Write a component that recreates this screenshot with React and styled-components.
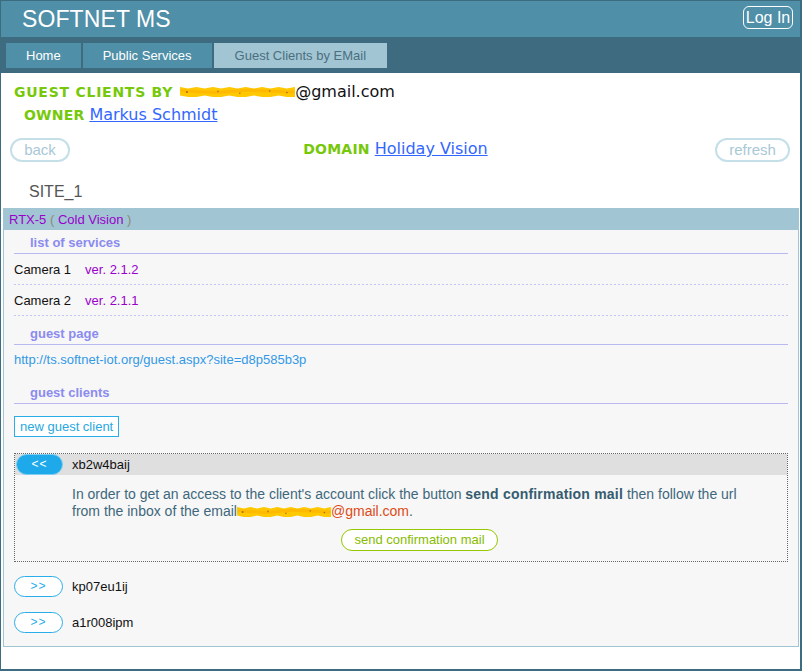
import React from 'react';
import styled, { createGlobalStyle } from 'styled-components';

const Global = createGlobalStyle`
  html, body { margin: 0; padding: 0; background: #fff; }
  body { font-family: "Liberation Sans", Arial, sans-serif; }
  *, *::before, *::after { box-sizing: border-box; }
`;

const Frame = styled.div`
  width: 802px;
  height: 671px;
  border-style: solid;
  border-color: #3d6b7f;
  border-width: 1px 2px 2px 1px;
  display: flex;
  flex-direction: column;
  background: #fff;
  overflow: hidden;
`;

const Header = styled.header`
  height: 36px;
  flex: none;
  background: #4f8fa8;
  display: flex;
  align-items: center;
  justify-content: space-between;
  padding: 0 7px 0 21px;
`;

const Brand = styled.div`
  font-size: 23px;
  color: #fff;
  letter-spacing: 0.1px;
`;

const LoginButton = styled.button`
  align-self: flex-start;
  margin-top: 5px;
  height: 23px;
  width: 50px;
  padding: 0;
  border: 1px solid #fff;
  border-radius: 6px;
  background: transparent;
  color: #fff;
  font-family: "Liberation Sans", Arial, sans-serif;
  font-size: 16px;
  line-height: 21px;
`;

const Nav = styled.nav`
  height: 36px;
  flex: none;
  background: #3e6b80;
  display: flex;
  gap: 2px;
  padding: 6px 0 5px 5px;
`;

const Tab = styled.div`
  height: 25px;
  padding: 0 ${p => (p.$active ? 21 : 20)}px;
  display: flex;
  align-items: center;
  font-size: 13px;
  color: ${p => (p.$active ? '#4b6f80' : '#fff')};
  background: ${p => (p.$active ? '#a2c5d3' : '#4f8fa8')};
`;

const Content = styled.main`
  flex: 1;
  display: flex;
  flex-direction: column;
  padding-top: 9px;
`;

const TitleLine = styled.div`
  line-height: 20px;
  height: 20px;
  padding-left: 13px;
  display: flex;
  align-items: center;
  white-space: nowrap;
`;

const OwnerLine = styled(TitleLine)`
  margin-top: 3px;
  padding-left: 23px;
`;

const GreenLabel = styled.span`
  font-family: "DejaVu Sans", Verdana, sans-serif;
  font-weight: bold;
  font-size: 14px;
  letter-spacing: ${p => p.$ls ?? 0.2}px;
  color: #76c80a;
  margin-right: ${p => p.$gap || 5}px;
`;

const EmailText = styled.span`
  font-family: "DejaVu Sans", Verdana, sans-serif;
  font-size: 16px;
  color: #111;
`;

const PersonLink = styled.a`
  font-family: "DejaVu Sans", Verdana, sans-serif;
  font-size: 16px;
  color: #3366ff;
  text-decoration: underline;
  cursor: pointer;
`;

const ScribbleSvg = styled.svg`
  display: block;
  flex: none;
`;

const InlineScribble = styled.svg`
  display: inline-block;
  vertical-align: -2px;
`;

const ActionRow = styled.div`
  margin-top: 13px;
  height: 24px;
  padding: 0 10px 0 9px;
  display: flex;
  align-items: center;
  justify-content: space-between;
`;

const GhostButton = styled.button`
  height: 24px;
  width: ${p => p.$w}px;
  padding: 0;
  border: 2px solid #c5dfe9;
  border-radius: 12px;
  background: #fff;
  color: #a9c8d6;
  font-family: "Liberation Sans", Arial, sans-serif;
  font-size: 15px;
  line-height: 20px;
`;

const DomainLine = styled.div`
  display: flex;
  align-items: center;
  margin-left: 6px;
  margin-top: -3px;
`;

const SiteLabel = styled.div`
  margin-top: 20px;
  padding-left: 28px;
  font-size: 16px;
  line-height: 20px;
  color: #555;
`;

const Panel = styled.section`
  margin: 6px 1px 0 2px;
  border: 1px solid #a2c5d3;
  background: #f7f7f7;
`;

const PanelHeader = styled.div`
  height: 21px;
  line-height: 21px;
  background: #a2c5d3;
  padding-left: 5px;
  font-size: 13px;
`;

const Purple = styled.span`
  color: #9900cc;
`;

const Paren = styled.span`
  color: #8a8a78;
`;

const PanelBody = styled.div`
  padding: 0 10px 13px 10px;
  display: flex;
  flex-direction: column;
`;

const SectionTitle = styled.div`
  margin-top: ${p => p.$mt}px;
  padding: 0 0 2px 16px;
  line-height: 16px;
  font-size: 13px;
  font-weight: bold;
  color: #8b8bef;
  border-bottom: 1px solid #b9b9f2;
`;

const ServiceRow = styled.div`
  height: 31px;
  padding-top: 1px;
  line-height: 30px;
  font-size: 13px;
  color: #111;
  display: flex;
  gap: 14px;
  background: repeating-linear-gradient(to right, #c4c4f2 0 2px, transparent 2px 4px) left bottom / 100% 1px no-repeat;
`;

const UrlLink = styled.a`
  display: block;
  line-height: 30px;
  height: 30px;
  font-size: 13px;
  color: #3399e6;
  text-decoration: none;
`;

const NewClientButton = styled.button`
  align-self: flex-start;
  margin-top: 12px;
  height: 21px;
  padding: 0 5px;
  border: 1px solid #2aaeea;
  background: #fff;
  color: #29a8e0;
  font-family: "Liberation Sans", Arial, sans-serif;
  font-size: 13px;
  line-height: 19px;
`;

const ClientBox = styled.div`
  margin-top: 16px;
  border: 1px dotted #666;
`;

const ClientRow = styled.div`
  height: 21px;
  display: flex;
  align-items: center;
  gap: 9px;
  font-size: 13px;
  color: #111;
  margin-top: ${p => p.$mt || 0}px;
  padding-left: ${p => (p.$open ? 1 : 0)}px;
  background: ${p => (p.$open ? '#dfdfdf' : 'transparent')};
`;

const ToggleButton = styled.button`
  flex: none;
  height: 21px;
  width: ${p => (p.$open ? 47 : 49)}px;
  padding: 0;
  border-radius: 11px;
  border: 1px solid ${p => (p.$open ? '#7fcdf0' : '#2aaeea')};
  background: ${p => (p.$open ? '#1eaaea' : '#fff')};
  color: ${p => (p.$open ? '#fff' : '#2aaeea')};
  font-family: "Liberation Sans", Arial, sans-serif;
  font-size: 12px;
  line-height: 19px;
  letter-spacing: 1px;
`;

const ClientDetails = styled.div`
  padding: 11px 20px 10px 57px;
  display: flex;
  flex-direction: column;
  align-items: center;
`;

const Message = styled.p`
  margin: 0;
  align-self: stretch;
  padding-right: 14px;
  font-size: 14px;
  line-height: 17px;
  color: #3e677c;
  b { color: #355c70; letter-spacing: 0.2px; }
`;

const Highlight = styled.span`
  color: #dd4b16;
`;

const ConfirmButton = styled.button`
  margin-top: 9px;
  height: 22px;
  padding: 0 12px;
  border: 1px solid #95c800;
  border-radius: 11px;
  background: #fff;
  color: #86bb00;
  font-family: "Liberation Sans", Arial, sans-serif;
  font-size: 13px;
  line-height: 20px;
`;

function Scribble({ w, h, inline }) {
  const Svg = inline ? InlineScribble : ScribbleSvg;
  const pts = [];
  const n = 14;
  for (let i = 0; i <= n; i++) {
    const x = (w * i) / n;
    const jig = i % 2 ? 1.5 : 0;
    pts.push(`${x.toFixed(1)},${(1 + jig).toFixed(1)}`);
  }
  for (let i = n; i >= 0; i--) {
    const x = (w * i) / n;
    const jig = i % 3 === 0 ? 1.5 : 0;
    pts.push(`${x.toFixed(1)},${(h - 1 - jig).toFixed(1)}`);
  }
  return (
    <Svg width={w} height={h} viewBox={`0 0 ${w} ${h}`}>
      <polygon points={pts.join(' ')} fill="#ffc800" />
      <path
        d={`M2 ${h * 0.4} L${w * 0.3} ${h * 0.55} L${w * 0.6} ${h * 0.35} L${w - 2} ${h * 0.5}`}
        stroke="#ffb000"
        strokeWidth={h * 0.25}
        fill="none"
        strokeLinecap="round"
        opacity="0.6"
      />
      <circle cx={w * 0.06} cy={h * 0.5} r="1" fill="#a86a00" />
      <circle cx={w * 0.33} cy={h * 0.45} r="0.9" fill="#c07800" />
      <circle cx={w * 0.52} cy={h * 0.6} r="0.8" fill="#b07000" />
      <circle cx={w * 0.78} cy={h * 0.4} r="0.9" fill="#c07800" />
      <circle cx={w * 0.93} cy={h * 0.55} r="0.8" fill="#a86a00" />
    </Svg>
  );
}

const clients = [
  { id: 'kp07eu1ij', mt: 14 },
  { id: 'a1r008ipm', mt: 15 },
];

export default function App() {
  return (
    <>
      <Global />
      <Frame>
        <Header>
          <Brand>SOFTNET MS</Brand>
          <LoginButton>Log In</LoginButton>
        </Header>
        <Nav>
          <Tab>Home</Tab>
          <Tab>Public Services</Tab>
          <Tab $active>Guest Clients by EMail</Tab>
        </Nav>
        <Content>
          <TitleLine>
            <GreenLabel $ls={0.75} $gap={7}>GUEST CLIENTS BY</GreenLabel>
            <Scribble w={115} h={12} />
            <EmailText>@gmail.com</EmailText>
          </TitleLine>
          <OwnerLine>
            <GreenLabel>OWNER</GreenLabel>
            <PersonLink>Markus Schmidt</PersonLink>
          </OwnerLine>
          <ActionRow>
            <GhostButton $w={60}>back</GhostButton>
            <DomainLine>
              <GreenLabel>DOMAIN</GreenLabel>
              <PersonLink>Holiday Vision</PersonLink>
            </DomainLine>
            <GhostButton $w={75}>refresh</GhostButton>
          </ActionRow>
          <SiteLabel>SITE_1</SiteLabel>
          <Panel>
            <PanelHeader>
              <Purple>RTX-5</Purple> <Paren>(</Paren> <Purple>Cold Vision</Purple> <Paren>)</Paren>
            </PanelHeader>
            <PanelBody>
              <SectionTitle $mt={5}>list of services</SectionTitle>
              <ServiceRow>
                <span>Camera 1</span>
                <Purple>ver. 2.1.2</Purple>
              </ServiceRow>
              <ServiceRow>
                <span>Camera 2</span>
                <Purple>ver. 2.1.1</Purple>
              </ServiceRow>
              <SectionTitle $mt={10}>guest page</SectionTitle>
              <UrlLink>http://ts.softnet-iot.org/guest.aspx?site=d8p585b3p</UrlLink>
              <SectionTitle $mt={10}>guest clients</SectionTitle>
              <NewClientButton>new guest client</NewClientButton>
              <ClientBox>
                <ClientRow $open>
                  <ToggleButton $open>&lt;&lt;</ToggleButton>
                  <span>xb2w4baij</span>
                </ClientRow>
                <ClientDetails>
                  <Message>
                    In order to get an access to the client's account click the button{' '}
                    <b>send confirmation mail</b> then follow the url from the inbox of the email
                    <Scribble inline w={94} h={12} />
                    <Highlight>@gmail.com</Highlight>.
                  </Message>
                  <ConfirmButton>send confirmation mail</ConfirmButton>
                </ClientDetails>
              </ClientBox>
              {clients.map(c => (
                <ClientRow key={c.id} $mt={c.mt}>
                  <ToggleButton>&gt;&gt;</ToggleButton>
                  <span>{c.id}</span>
                </ClientRow>
              ))}
            </PanelBody>
          </Panel>
        </Content>
      </Frame>
    </>
  );
}
